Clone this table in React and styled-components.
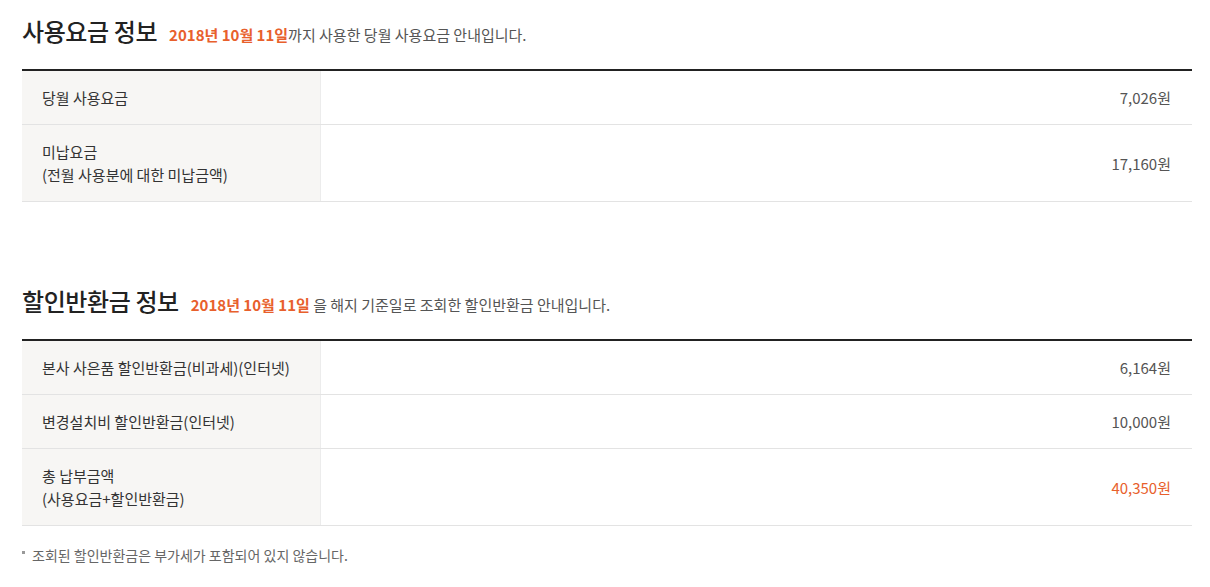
import React from 'react';
import styled, { createGlobalStyle } from 'styled-components';

const Global = createGlobalStyle`
    body{
        margin: 0;
        background: #fff;
        font-family: "Noto Sans CJK KR", "Noto Sans", sans-serif;
        color: #333;
    }
`

const usage = [
    { label: ['당월 사용요금'], value: '7,026원' },
    { label: ['미납요금', '(전월 사용분에 대한 미납금액)'], value: '17,160원' },
];

const refund = [
    { label: ['본사 사은품 할인반환금(비과세)(인터넷)'], value: '6,164원' },
    { label: ['변경설치비 할인반환금(인터넷)'], value: '10,000원' },
    { label: ['총 납부금액', '(사용요금+할인반환금)'], value: '40,350원', total: true },
];

const Table = ({ rows }) => (
    <Tbl>
        {rows.map((r, i) => (
            <Row key={i}>
                <Label>{r.label.map((l, j) => <div key={j}>{l}</div>)}</Label>
                <Value $total={r.total}>{r.value}</Value>
            </Row>
        ))}
    </Tbl>
);

const App = () => {
    return (
        <Wrap>
            <Global />
            <Section>
                <Head>
                    <h2>사용요금 정보</h2>
                    <p><b>2018년 10월 11일</b>까지 사용한 당월 사용요금 안내입니다.</p>
                </Head>
                <Table rows={usage} />
            </Section>
            <Section $second>
                <Head>
                    <h2>할인반환금 정보</h2>
                    <p><b>2018년 10월 11일</b> 을 해지 기준일로 조회한 할인반환금 안내입니다.</p>
                </Head>
                <Table rows={refund} />
                <Note>조회된 할인반환금은 부가세가 포함되어 있지 않습니다.</Note>
            </Section>
        </Wrap>
    )
};

const Wrap = styled.div`
    width: 1170px;
    padding: 14px 22px 0;
`
const Section = styled.section`
    margin-top: ${p => p.$second ? '82px' : '0'};
`
const Head = styled.div`
    display: flex;
    align-items: baseline;
    gap: 12px;
    height: 34px;
    margin-bottom: 21px;
    h2{
        margin: 0;
        font-size: 24px;
        font-weight: 500;
        color: #222;
        line-height: 34px;
        letter-spacing: -0.4px;
    }
    p{
        margin: 0;
        font-size: 15px;
        color: #555;
    }
    p b{
        color: #e8602c;
        font-weight: 700;
    }
`
const Tbl = styled.div`
    border-top: 2px solid #222;
`
const Row = styled.div`
    display: grid;
    grid-template-columns: 299px 1fr;
    border-bottom: 1px solid #e3e3e3;
    font-size: 15px;
    line-height: 23px;
`
const Label = styled.div`
    background: #f7f6f4;
    border-right: 1px solid #ececec;
    padding: 15px 20px 15px 20px;
    color: #333;
`
const Value = styled.div`
    display: flex;
    align-items: center;
    justify-content: flex-end;
    padding-right: 21px;
    color: ${p => p.$total ? '#e8602c' : '#555'};
`
const Note = styled.p`
    position: relative;
    margin: 19px 0 0;
    padding-left: 10px;
    font-size: 14px;
    color: #666;
    &::before{
        content: '';
        position: absolute;
        left: 0;
        top: 6px;
        width: 3px;
        height: 3px;
        background: #999;
    }
`

export default App;
